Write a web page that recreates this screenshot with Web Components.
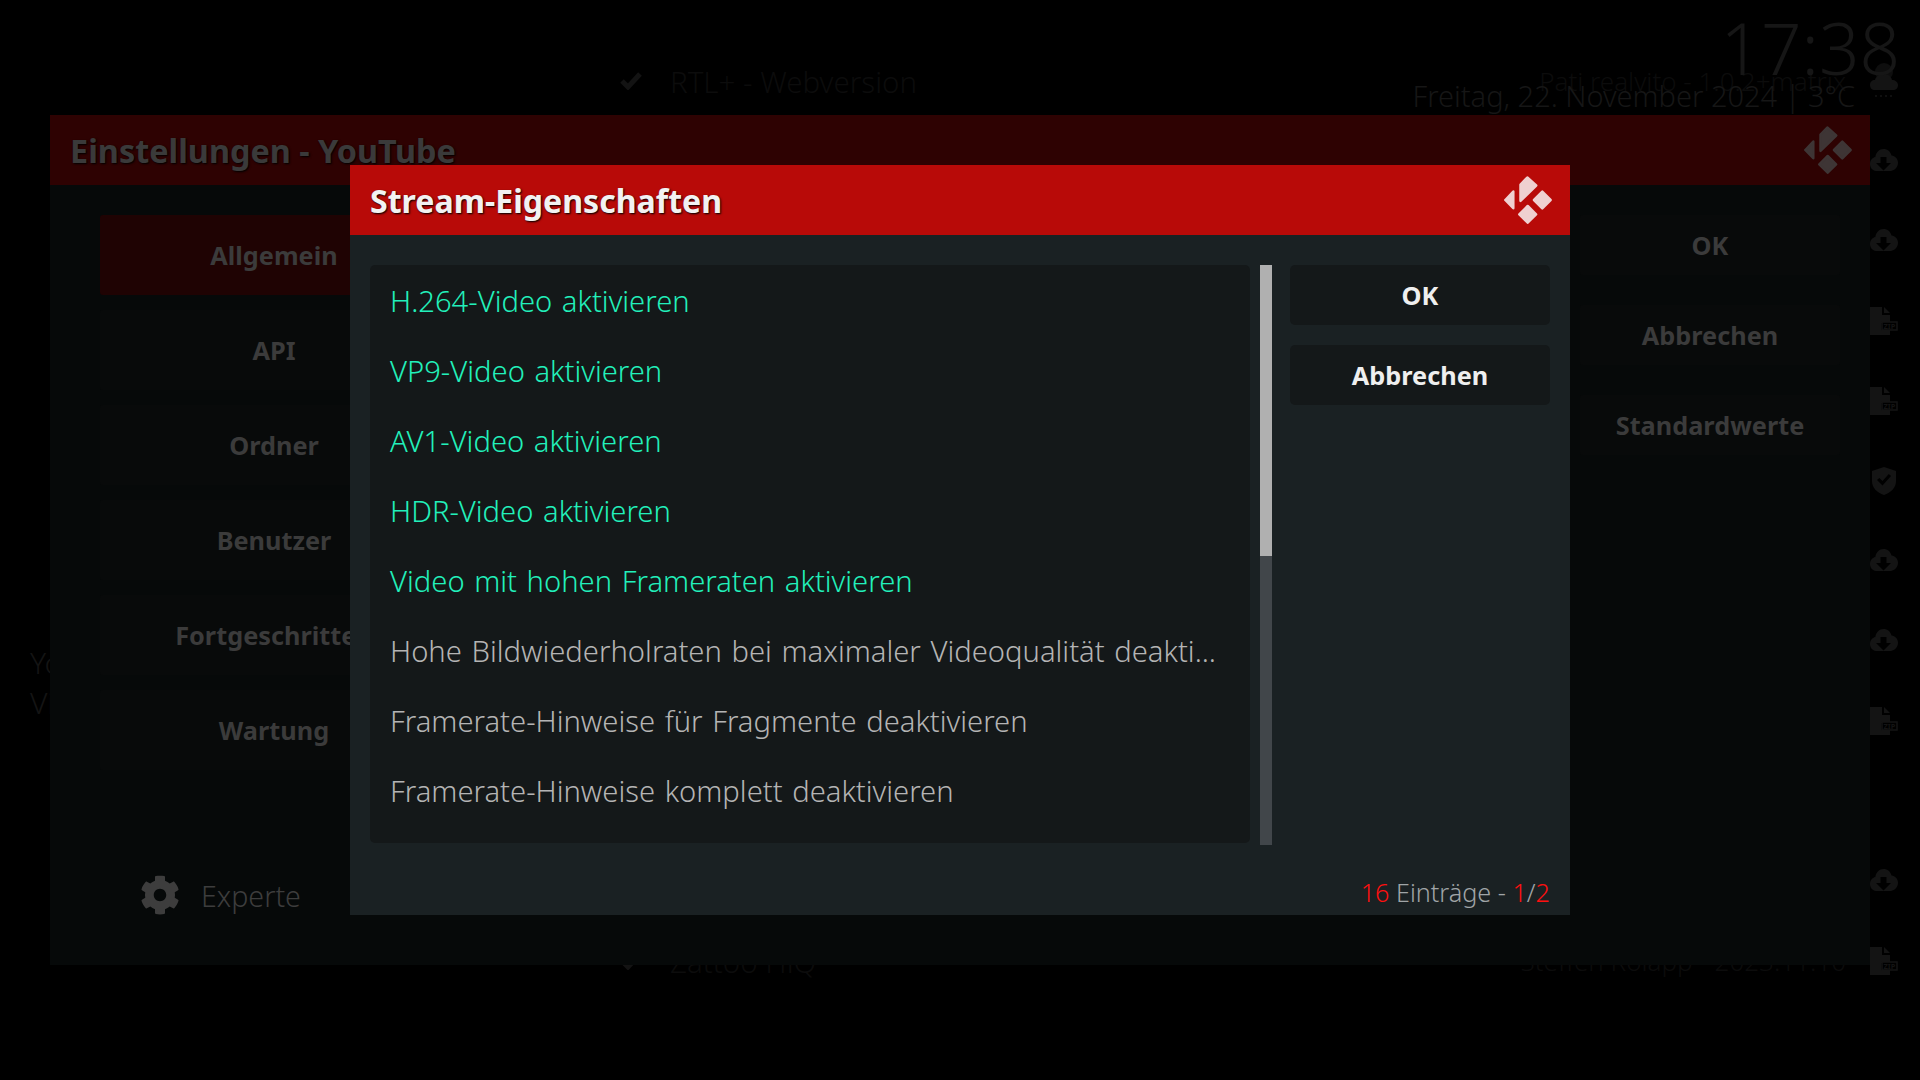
<!DOCTYPE html>
<html lang="de">
<head>
<meta charset="utf-8">
<title>Stream-Eigenschaften</title>
<style>
  html,body{margin:0;height:100%;background:#000;overflow:hidden;font-family:"Noto Sans",sans-serif;}
</style>
</head>
<body>
<kodi-backdrop></kodi-backdrop>

<kodi-settings heading="Einstellungen - YouTube">
  <kodi-tab active>Allgemein</kodi-tab>
  <kodi-tab>API</kodi-tab>
  <kodi-tab>Ordner</kodi-tab>
  <kodi-tab>Benutzer</kodi-tab>
  <kodi-tab>Fortgeschritten</kodi-tab>
  <kodi-tab>Wartung</kodi-tab>
</kodi-settings>

<kodi-dialog heading="Stream-Eigenschaften">
  <kodi-item on>H.264-Video aktivieren</kodi-item>
  <kodi-item on>VP9-Video aktivieren</kodi-item>
  <kodi-item on>AV1-Video aktivieren</kodi-item>
  <kodi-item on>HDR-Video aktivieren</kodi-item>
  <kodi-item on>Video mit hohen Frameraten aktivieren</kodi-item>
  <kodi-item>Hohe Bildwiederholraten bei maximaler Videoqualität deakti...</kodi-item>
  <kodi-item>Framerate-Hinweise für Fragmente deaktivieren</kodi-item>
  <kodi-item>Framerate-Hinweise komplett deaktivieren</kodi-item>
</kodi-dialog>

<script>
// little helper, every element here is the same shadow + template dance
function shadow(el, html) {
  const root = el.attachShadow({ mode: 'open' });
  root.innerHTML = html;
  return root;
}

const ICONS = {
  cloud: `<svg viewBox="0 0 28 24" width="28" height="24"><path fill="currentColor" fill-rule="evenodd" d="M13.500 0c3.900 0 7.200 2.700 8 6.500 3.600.3 6.500 3.300 6.500 7.300 0 4-3.200 7.700-7 8.200H6c-3.500-.4-6-3.400-6-7 0-3.500 2.300-6.200 5.300-6.900C6 3.400 9.400 0 13.500 0zM10.500 8v6H6l7.500 7.500L21 14h-4.500V8z"/></svg>`,
  zip: `<svg viewBox="0 0 28 28" width="28" height="28"><path fill="currentColor" d="M0 0h12v8h8v8h-9v7h9v5H0z"/><path fill="currentColor" d="M14 0l6 6h-6z"/><rect x="12" y="15" width="15" height="8" fill="#000" stroke="currentColor" stroke-width="1.500"/><text x="19.500" y="22" font-family="Noto Sans,sans-serif" font-size="7.500" font-weight="700" text-anchor="middle" fill="currentColor">ZIP</text></svg>`,
  shield: `<svg viewBox="0 0 28 28" width="28" height="28"><path fill="currentColor" fill-rule="evenodd" d="M14 0l12 4v10c0 7-5 11.500-12 14C7 25.500 2 21 2 14V4zm7 9l-2.200-2-6.300 7-3.200-3L7 13l5.500 5.500z"/></svg>`,
  weather: `<svg viewBox="0 0 28 36" width="28" height="36"><circle cx="14" cy="9" r="9" fill="currentColor" opacity=".7"/><path fill="currentColor" d="M5 27c-3 0-5-2-5-5s2-5 5-5c1-4 5-6 9-6s7 2 8 6c3 0 6 2 6 5s-2 5-5 5z"/><path stroke="currentColor" stroke-width="1.500" stroke-dasharray="2 3" d="M5 33h20"/></svg>`,
  check: `<svg viewBox="0 0 22 18" width="22" height="18"><path fill="none" stroke="currentColor" stroke-width="5" d="M2 9l6 6L20 2"/></svg>`,
  gear: `<svg viewBox="0 0 512 512" width="40" height="40"><path fill="currentColor" d="M487.400 315.700l-42.600-24.600c4.300-23.200 4.300-47 0-70.200l42.600-24.600c4.900-2.800 7.100-8.600 5.500-14-11.100-35.600-30-67.800-54.700-94.600-3.800-4.100-10-5.100-14.800-2.300L380.800 110c-17.900-15.400-38.500-27.300-60.800-35.100V25.800c0-5.600-3.900-10.500-9.400-11.700-36.700-8.200-74.300-7.800-109.200 0-5.500 1.200-9.400 6.100-9.400 11.700V75c-22.200 7.900-42.800 19.800-60.800 35.100L88.700 85.500c-4.900-2.800-11-1.900-14.800 2.300-24.700 26.700-43.600 58.900-54.700 94.600-1.700 5.400.6 11.200 5.500 14L67.300 221c-4.300 23.200-4.300 47 0 70.200l-42.600 24.600c-4.900 2.800-7.100 8.600-5.500 14 11.100 35.600 30 67.800 54.700 94.600 3.800 4.100 10 5.100 14.800 2.300l42.600-24.600c17.900 15.400 38.500 27.300 60.800 35.100v49.200c0 5.600 3.900 10.500 9.400 11.700 36.700 8.200 74.300 7.800 109.200 0 5.500-1.200 9.400-6.100 9.400-11.700v-49.200c22.200-7.900 42.800-19.800 60.800-35.100l42.600 24.600c4.900 2.800 11 1.900 14.800-2.300 24.700-26.700 43.600-58.900 54.700-94.600 1.500-5.500-.7-11.300-5.600-14.100zM256 336c-44.100 0-80-35.900-80-80s35.900-80 80-80 80 35.900 80 80-35.900 80-80 80z"/></svg>`
};

class KodiLogo extends HTMLElement {
  connectedCallback() {
    shadow(this, `
      <style>:host{display:block;width:48px;height:48px;color:var(--logo-color,#efd0d0)} svg{display:block}</style>
      <svg viewBox="0 0 48 48" width="48" height="48" fill="currentColor" stroke="currentColor" stroke-width="2.500" stroke-linejoin="round">
        <path d="M9.300 15.500v16.700L1.300 24z"/>
        <path d="M16.500 8.500l6.800-7 8.900 8-15.700 15.300z"/>
        <path d="M38.300 15.700l8.300 8.300-8.300 8.300-8.300-8.300z"/>
        <path d="M23.700 30l8.400 8.300-8.400 8.400-8.400-8.400z"/>
      </svg>`);
  }
}
customElements.define('kodi-logo', KodiLogo);

// the add-on browser that sits dimmed behind everything
class KodiBackdrop extends HTMLElement {
  connectedCallback() {
    const icons = ['weather', 'cloud', 'cloud', 'zip', 'zip', 'shield', 'cloud', 'cloud', 'zip', '', 'cloud', 'zip'];
    const labels = {
      0: ['RTL+ - Webversion', 'Pati realvito - 1.0.2+matrix'],
      11: ['Zattoo HiQ', 'Steffen Rolapp - 2023.11.10']
    };
    const rows = icons.map((name, i) => {
      const l = labels[i];
      return `<div class="row">
        <span class="tick">${l ? ICONS.check : ''}</span>
        <span class="name">${l ? l[0] : ''}</span>
        <span class="by">${l ? l[1] : ''}</span>
        <span class="ico">${name ? ICONS[name] : ''}</span>
      </div>`;
    }).join('');
    shadow(this, `
      <style>
        :host{display:block;height:1080px;position:relative;color:#0c0c0c;font-weight:300}
        .rows{padding-top:41px;display:flex;flex-direction:column}
        .row{height:80px;display:grid;grid-template-columns:620px 50px 1fr auto 28px;align-items:center;padding-right:22px;font-size:29.500px}
        .row>*{min-width:0}
        .tick{grid-column:1;justify-self:end;margin-right:-22px;color:#131313;display:flex}
        .name{grid-column:3;white-space:nowrap}
        .by{grid-column:4;margin-right:24px;white-space:nowrap;font-size:26px}
        .ico{grid-column:5;color:#141414;display:flex;justify-content:center}
        .clock{position:absolute;top:0;right:20px;text-align:right;color:#161616}
        .time{font-size:71px;line-height:96px;font-weight:300}
        .date{font-size:29px;line-height:40px;margin-top:-20px;margin-right:45px}
        .side{position:absolute;left:30px;top:643px;font-size:30px;line-height:40px;color:#141414}
      </style>
      <div class="rows">${rows}</div>
      <div class="clock"><div class="time">17:38</div><div class="date">Freitag, 22. November 2024 | 3°C</div></div>
      <div class="side">Yo<br>Vi</div>`);
  }
}
customElements.define('kodi-backdrop', KodiBackdrop);

class KodiTab extends HTMLElement {
  connectedCallback() {
    shadow(this, `
      <style>
        :host{display:flex;align-items:center;justify-content:center;height:80px;background:#080a0a;color:#3b3b3b;font-size:25.300px;font-weight:700;white-space:nowrap;border-radius:3px}
        :host([active]){background:#1f0303}
      </style><slot></slot>`);
  }
}
customElements.define('kodi-tab', KodiTab);

class KodiSettings extends HTMLElement {
  connectedCallback() {
    shadow(this, `
      <style>
        :host{position:absolute;left:50px;top:115px;width:1820px;height:850px;background:#060909;display:flex;flex-direction:column}
        header{height:70px;flex:none;background:#2e0202;display:flex;align-items:center;justify-content:space-between;padding:0 18px 0 20px}
        h1{margin:0;font-size:32.400px;font-weight:700;color:#3a3a3a;text-shadow:1px 1px 2px #000}
        .body{flex:1;display:grid;grid-template-columns:348px 1fr 260px;column-gap:0;padding:30px 30px 0 50px}
        .tabs{display:flex;flex-direction:column;gap:15px}
        .actions{display:flex;flex-direction:column;gap:30px}
        .btn{height:60px;flex:none;background:#080a0a;color:#3b3b3b;font-size:25.300px;font-weight:700;display:flex;align-items:center;justify-content:center;border-radius:3px}
        .expert{display:flex;align-items:center;gap:21px;color:#3d3d3d;font-size:28.600px;font-weight:300;position:absolute;left:90px;top:760px}
      </style>
      <header><h1>${this.getAttribute('heading')}</h1><kodi-logo style="--logo-color:#3e3535"></kodi-logo></header>
      <div class="body">
        <div class="tabs"><slot></slot></div>
        <div></div>
        <div class="actions">
          <div class="btn">OK</div><div class="btn">Abbrechen</div><div class="btn">Standardwerte</div>
        </div>
      </div>
      <div class="expert">${ICONS.gear}<span>Experte</span></div>`);
  }
}
customElements.define('kodi-settings', KodiSettings);

class KodiItem extends HTMLElement {
  connectedCallback() {
    shadow(this, `
      <style>
        :host{display:flex;align-items:center;box-sizing:border-box;height:70px;padding:2px 20px 0;color:#b4b4b4;font-size:29.200px;word-spacing:2px;font-weight:300;white-space:nowrap}
        :host([on]){color:#22f0bb}
      </style><slot></slot>`);
  }
}
customElements.define('kodi-item', KodiItem);

class KodiButton extends HTMLElement {
  connectedCallback() {
    shadow(this, `
      <style>
        :host{display:flex;align-items:center;justify-content:center;height:60px;background:#141819;color:#efefef;font-size:25.300px;font-weight:700;border-radius:5px}
      </style><slot></slot>`);
  }
}
customElements.define('kodi-button', KodiButton);

class KodiDialog extends HTMLElement {
  connectedCallback() {
    shadow(this, `
      <style>
        :host{position:absolute;left:350px;top:165px;width:1220px;height:750px;background:#1a2123;display:flex;flex-direction:column}
        header{height:70px;flex:none;background:#b80a08;display:flex;align-items:center;justify-content:space-between;padding:0 18px 0 20px}
        h1{margin:0;font-size:32.100px;font-weight:700;color:#f2f2f2;text-shadow:1px 1px 2px #000}
        .body{display:grid;grid-template-columns:880px 12px 260px;column-gap:10px;padding:30px 20px 0;align-items:start}
        .list{height:578px;background:#141819;border-radius:5px}
        .track{height:580px;background:#41464a;display:flex}
        .thumb{width:100%;height:291px;background:#b0b0b0}
        .side{grid-column:3;position:relative;left:8px;display:flex;flex-direction:column;gap:20px}
        footer{margin-top:auto;padding:0 20px 5px;text-align:right;font-size:25.200px;line-height:36px;color:#a0a5a7;font-weight:300}
        b{font-weight:300;color:#ff1010}
      </style>
      <header><h1>${this.getAttribute('heading')}</h1><kodi-logo></kodi-logo></header>
      <div class="body">
        <div class="list"><slot></slot></div>
        <div class="track"><div class="thumb"></div></div>
        <div class="side"><kodi-button>OK</kodi-button><kodi-button>Abbrechen</kodi-button></div>
      </div>
      <footer><b>16</b> Einträge - <b>1</b>/<b>2</b></footer>`);
  }
}
customElements.define('kodi-dialog', KodiDialog);
</script>
</body>
</html>
